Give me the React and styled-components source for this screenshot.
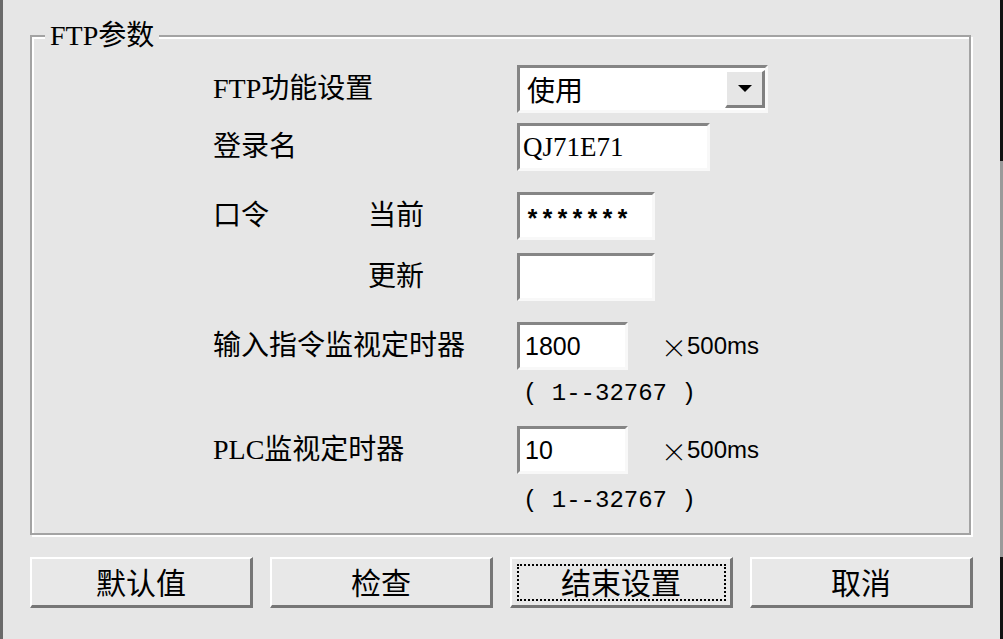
import React from 'react';
import styled, { createGlobalStyle } from 'styled-components';

const GlobalStyle = createGlobalStyle`
  html, body {
    margin: 0;
    padding: 0;
    background: #e6e6e6;
  }
  body {
    font-family: "Liberation Serif", "Noto Sans CJK SC", serif;
    color: #000;
  }
`;

const Screen = styled.div`
  width: 1003px;
  height: 639px;
  display: flex;
  background: #e6e6e6;
  overflow: hidden;
`;

const LeftEdge = styled.div`
  width: 3px;
  flex-shrink: 0;
  background: #6a6a6a;
`;

const RightEdge = styled.div`
  width: 3px;
  flex-shrink: 0;
  display: flex;
  flex-direction: column;
`;

const EdgePiece = styled.div`
  height: ${p => (p.$h ? `${p.$h}px` : 'auto')};
  flex: ${p => (p.$h ? 'none' : 1)};
  background: ${p => p.$c};
`;

const Dialog = styled.div`
  flex: 1;
  display: flex;
  flex-direction: column;
  padding: 21px 27px 0 27px;
`;

// etched group box
const GroupBox = styled.fieldset`
  margin: 0 2px 0 0;
  padding: 0 0 16px 0;
  min-width: 0;
  border: 2px solid #a3a3a3;
  box-shadow: inset 2px 2px 0 #fff, 2px 2px 0 #fff;
`;

const GroupTitle = styled.legend`
  margin-left: 13px;
  padding: 0 5px;
  font-size: 28px;
  line-height: 30px;
  background: #e6e6e6;
  font-family: "Liberation Serif", "Noto Sans CJK SC", serif;
`;

const FieldRow = styled.div`
  display: grid;
  grid-template-columns: 155px 149px max-content;
  align-items: center;
  height: ${p => p.$h || 48}px;
  margin-top: ${p => p.$mt}px;
  padding-left: 181px;
`;

const Label = styled.div`
  grid-column: ${p => (p.$span ? '1 / 3' : 'auto')};
  font-size: 28px;
  line-height: 1;
  white-space: nowrap;
  font-family: "Liberation Serif", "Noto Sans CJK SC", serif;
`;

const Control = styled.div`
  grid-column: 3;
  display: flex;
  align-items: center;
  height: 100%;
`;

const TextBox = styled.div`
  box-sizing: border-box;
  width: ${p => p.$w}px;
  height: 48px;
  display: flex;
  align-items: center;
  padding-left: ${p => p.$pad || 3}px;
  padding-top: ${p => p.$padTop || 0}px;
  background: #fff;
  border-style: solid;
  border-width: 3px;
  border-color: #858585 #f8f8f8 #f8f8f8 #858585;
  font-family: ${p => p.$font || '"Liberation Serif", "Noto Sans CJK SC", serif'};
  font-size: ${p => p.$size || 27}px;
  font-weight: ${p => p.$weight || 400};
  white-space: nowrap;
`;

const ComboText = styled.span`
  flex: 1;
  font-family: "Noto Sans CJK SC", sans-serif;
  font-size: 28px;
`;

const DropButton = styled.div`
  box-sizing: border-box;
  width: 40px;
  height: 38px;
  display: flex;
  align-items: center;
  justify-content: center;
  background: #e6e6e6;
  border-style: solid;
  border-width: 2px 3px 3px 2px;
  border-color: #fff #808080 #808080 #fff;
`;

const Arrow = styled.div`
  width: 0;
  height: 0;
  border-left: 7px solid transparent;
  border-right: 7px solid transparent;
  border-top: 7px solid #000;
`;

const Unit = styled.span`
  display: flex;
  align-items: center;
  margin-left: 33px;
  font-family: "Liberation Sans", sans-serif;
  font-size: 24px;
`;

const Times = styled.span`
  font-family: "Noto Sans CJK SC", sans-serif;
  font-weight: 300;
  font-size: 26px;
`;

const Range = styled.span`
  padding-left: 6px;
  font-family: "Liberation Mono", monospace;
  font-size: 24px;
  white-space: pre;
`;

const ButtonBar = styled.div`
  display: grid;
  grid-template-columns: repeat(4, 1fr);
  gap: 17px;
  margin-top: 22px;
`;

const Button = styled.button`
  box-sizing: border-box;
  height: 51px;
  padding: 0 0 4px 0;
  background: #e8e8e8;
  border-style: solid;
  border-width: 2px 3px 3px 2px;
  border-color: #fff #767676 #767676 #fff;
  font-family: "Noto Sans CJK SC", sans-serif;
  font-size: 30px;
  color: #000;
  outline: ${p => (p.$focused ? '2px dotted #000' : 'none')};
  outline-offset: -9px;
`;

export default function App() {
  return (
    <Screen>
      <GlobalStyle />
      <LeftEdge />
      <Dialog>
        <GroupBox>
          <GroupTitle>FTP参数</GroupTitle>

          <FieldRow $mt={14}>
            <Label $span>FTP功能设置</Label>
            <Control>
              <TextBox $w={251} $pad={7}>
                <ComboText>使用</ComboText>
                <DropButton>
                  <Arrow />
                </DropButton>
              </TextBox>
            </Control>
          </FieldRow>

          <FieldRow $mt={10}>
            <Label $span>登录名</Label>
            <Control>
              <TextBox $w={193}>QJ71E71</TextBox>
            </Control>
          </FieldRow>

          <FieldRow $mt={21}>
            <Label>口令</Label>
            <Label>当前</Label>
            <Control>
              <TextBox
                $w={138}
                $pad={5}
                $padTop={11}
                $font='"Liberation Mono", monospace'
                $size={25}
                $weight={700}
              >
                *******
              </TextBox>
            </Control>
          </FieldRow>

          <FieldRow $mt={13}>
            <span />
            <Label>更新</Label>
            <Control>
              <TextBox $w={138} />
            </Control>
          </FieldRow>

          <FieldRow $mt={21}>
            <Label $span>输入指令监视定时器</Label>
            <Control>
              <TextBox $w={111} $pad={5} $font='"Liberation Sans", sans-serif' $size={25}>
                1800
              </TextBox>
              <Unit>
                <Times>×</Times>500ms
              </Unit>
            </Control>
          </FieldRow>

          <FieldRow $mt={6} $h={34}>
            <Control>
              <Range>( 1--32767 )</Range>
            </Control>
          </FieldRow>

          <FieldRow $mt={16}>
            <Label $span>PLC监视定时器</Label>
            <Control>
              <TextBox $w={111} $pad={5} $font='"Liberation Sans", sans-serif' $size={25}>
                10
              </TextBox>
              <Unit>
                <Times>×</Times>500ms
              </Unit>
            </Control>
          </FieldRow>

          <FieldRow $mt={9} $h={34}>
            <Control>
              <Range>( 1--32767 )</Range>
            </Control>
          </FieldRow>
        </GroupBox>

        <ButtonBar>
          <Button>默认值</Button>
          <Button>检查</Button>
          <Button $focused>结束设置</Button>
          <Button>取消</Button>
        </ButtonBar>
      </Dialog>
      <RightEdge>
        <EdgePiece $h={161} $c="#111" />
        <EdgePiece $c="#9a9a9a" />
        <EdgePiece $h={82} $c="#111" />
      </RightEdge>
    </Screen>
  );
}
